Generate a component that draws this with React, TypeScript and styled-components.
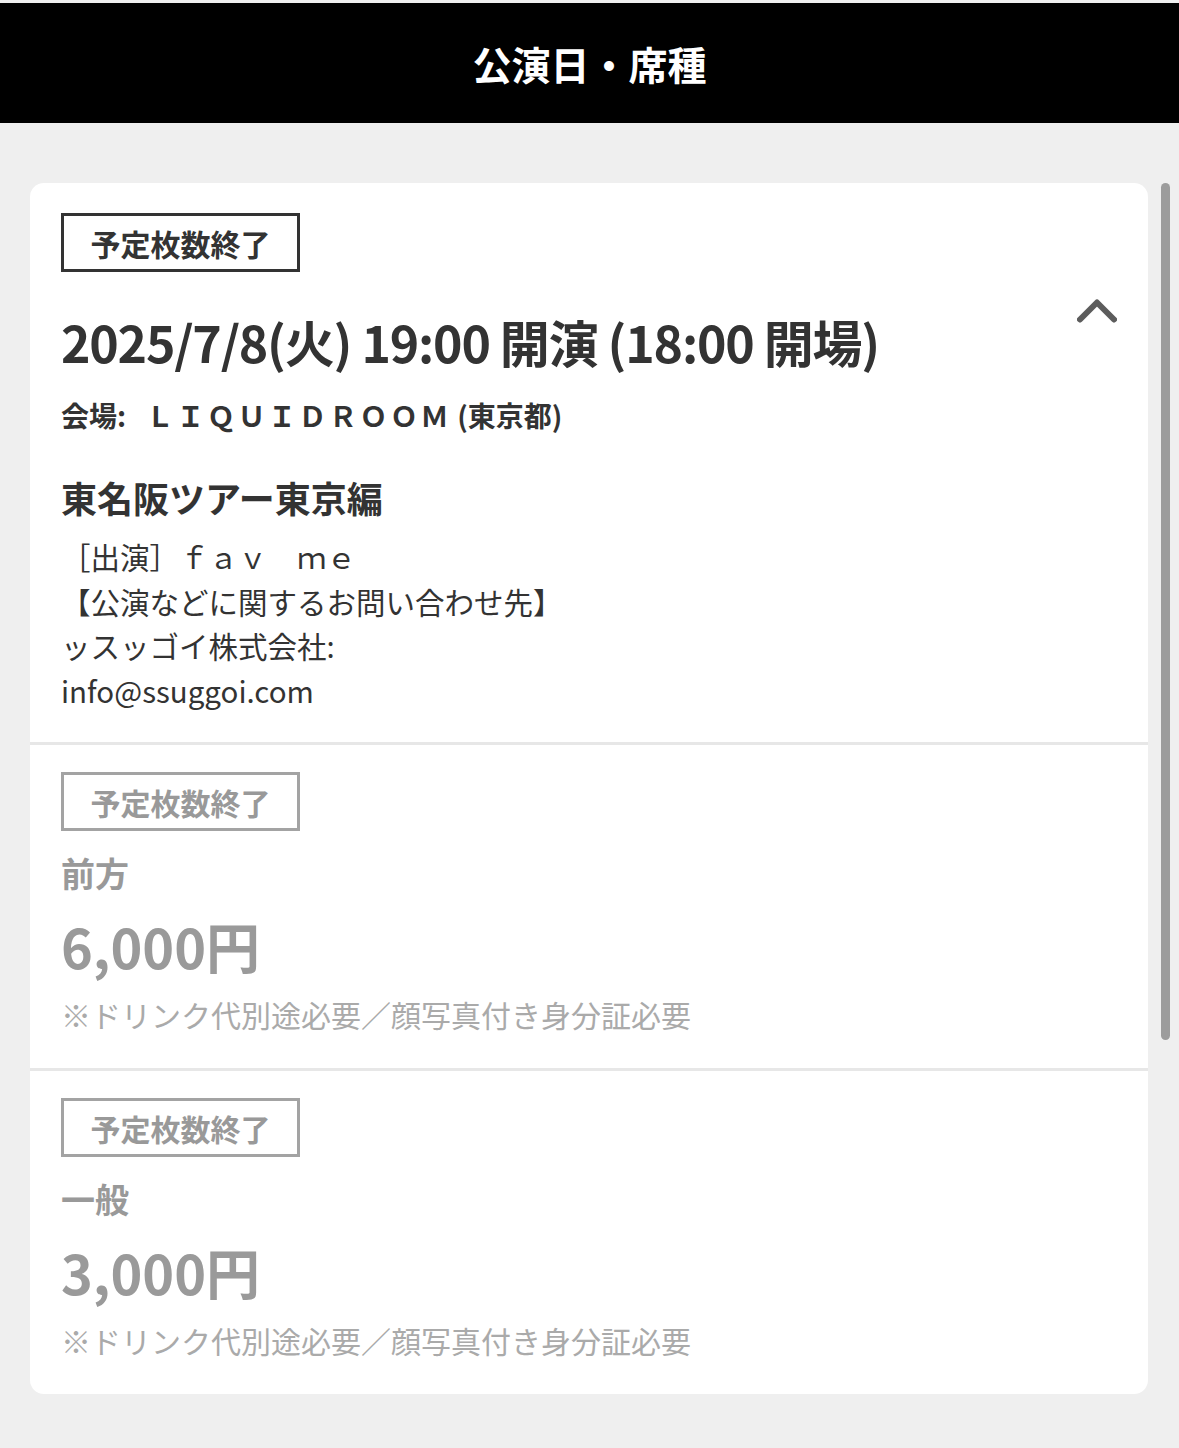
import React from "react";
import styled, { createGlobalStyle } from "styled-components";

const GlobalStyle = createGlobalStyle`
  html, body {
    margin: 0;
    padding: 0;
    background: #efefef;
    font-family: "Noto Sans CJK JP", "Noto Sans", sans-serif;
    color: #333;
  }
  * {
    box-sizing: border-box;
  }
`;

const Page = styled.div`
  position: relative;
  min-height: 1448px;
  padding-top: 3px;
`;

const Header = styled.header`
  height: 120px;
  background: #000;
  display: flex;
  align-items: center;
  justify-content: center;
`;

const HeaderTitle = styled.h1`
  margin: 0;
  color: #fff;
  font-size: 39px;
  font-weight: 700;
  line-height: 1;
`;

const Main = styled.main`
  padding: 60px 31px 55px 30px;
`;

const ScrollThumb = styled.div`
  position: absolute;
  top: 183px;
  right: 9px;
  width: 9px;
  height: 857px;
  border-radius: 5px;
  background: #9c9c9c;
`;

const Card = styled.div`
  background: #fff;
  border-radius: 14px;
  overflow: hidden;
`;

const Section = styled.section<{ $divided?: boolean }>`
  padding: ${p => (p.$divided ? "27px 31px 32px" : "30px 31px 30px")};
  border-top: ${p => (p.$divided ? "3px solid #e7e7e7" : "none")};
`;

const Badge = styled.div<{ $muted?: boolean }>`
  display: inline-flex;
  align-items: center;
  justify-content: center;
  width: 239px;
  height: 59px;
  border: 3px solid ${p => (p.$muted ? "#a3a3a3" : "#333")};
  color: ${p => (p.$muted ? "#999" : "#333")};
  font-size: 30px;
  font-weight: 700;
  line-height: 1;
`;

const DateRow = styled.div`
  display: flex;
  align-items: flex-start;
  justify-content: space-between;
  margin-top: 34px;
`;

const DateText = styled.h2`
  margin: 0;
  font-size: 50px;
  font-weight: 700;
  line-height: 70px;
  letter-spacing: -1.2px;
  color: #333;
`;

const Toggle = styled.button`
  margin: -8px 0 0 0;
  padding: 0;
  border: none;
  background: none;
  width: 40px;
  height: 25px;
  display: flex;
`;

const Venue = styled.div`
  margin-top: 19px;
  font-size: 28px;
  font-weight: 700;
  line-height: 40px;
  color: #333;
`;

const VenueName = styled.span`
  margin: 0 6px 0 20px;
  letter-spacing: 2.5px;
`;

const EventTitle = styled.h3`
  margin: 37px 0 0;
  font-size: 36px;
  font-weight: 700;
  line-height: 50px;
  color: #333;
`;

const Description = styled.div`
  margin-top: 12px;
  font-size: 29.5px;
  font-weight: 400;
  line-height: 44.5px;
  color: #333;
`;

const SeatName = styled.div`
  margin-top: 19px;
  font-size: 34px;
  font-weight: 700;
  line-height: 46px;
  color: #999;
`;

const Price = styled.div`
  margin-top: 15px;
  font-size: 54px;
  font-weight: 700;
  line-height: 70px;
  color: #9a9a9a;
`;

const Note = styled.div`
  margin-top: 11px;
  font-size: 30px;
  font-weight: 400;
  line-height: 44px;
  color: #aaa;
`;

const Chevron = () => (
  <svg width="40" height="25" viewBox="0 0 40 25">
    <polyline
      points="3,21.5 20,4.5 37,21.5"
      fill="none"
      stroke="#5c5c5c"
      strokeWidth="6"
      strokeLinecap="round"
      strokeLinejoin="round"
    />
  </svg>
);

const seats = [
  { name: "前方", price: "6,000円" },
  { name: "一般", price: "3,000円" }
];

const App: React.FunctionComponent = () => (
  <>
    <GlobalStyle />
    <Page>
      <Header>
        <HeaderTitle>公演日・席種</HeaderTitle>
      </Header>
      <Main>
        <Card>
          <Section>
            <Badge>予定枚数終了</Badge>
            <DateRow>
              <DateText>2025/7/8(火) 19:00 開演 (18:00 開場)</DateText>
              <Toggle aria-label="閉じる">
                <Chevron />
              </Toggle>
            </DateRow>
            <Venue>
              会場:
              <VenueName>ＬＩＱＵＩＤＲＯＯＭ</VenueName>(東京都)
            </Venue>
            <EventTitle>東名阪ツアー東京編</EventTitle>
            <Description>
              <div>［出演］ｆａｖ　ｍｅ</div>
              <div>【公演などに関するお問い合わせ先】</div>
              <div>ッスッゴイ株式会社:</div>
              <div>info@ssuggoi.com</div>
            </Description>
          </Section>
          {seats.map(seat => (
            <Section $divided key={seat.name}>
              <Badge $muted>予定枚数終了</Badge>
              <SeatName>{seat.name}</SeatName>
              <Price>{seat.price}</Price>
              <Note>※ドリンク代別途必要／顔写真付き身分証必要</Note>
            </Section>
          ))}
        </Card>
      </Main>
      <ScrollThumb />
    </Page>
  </>
);

export default App;
